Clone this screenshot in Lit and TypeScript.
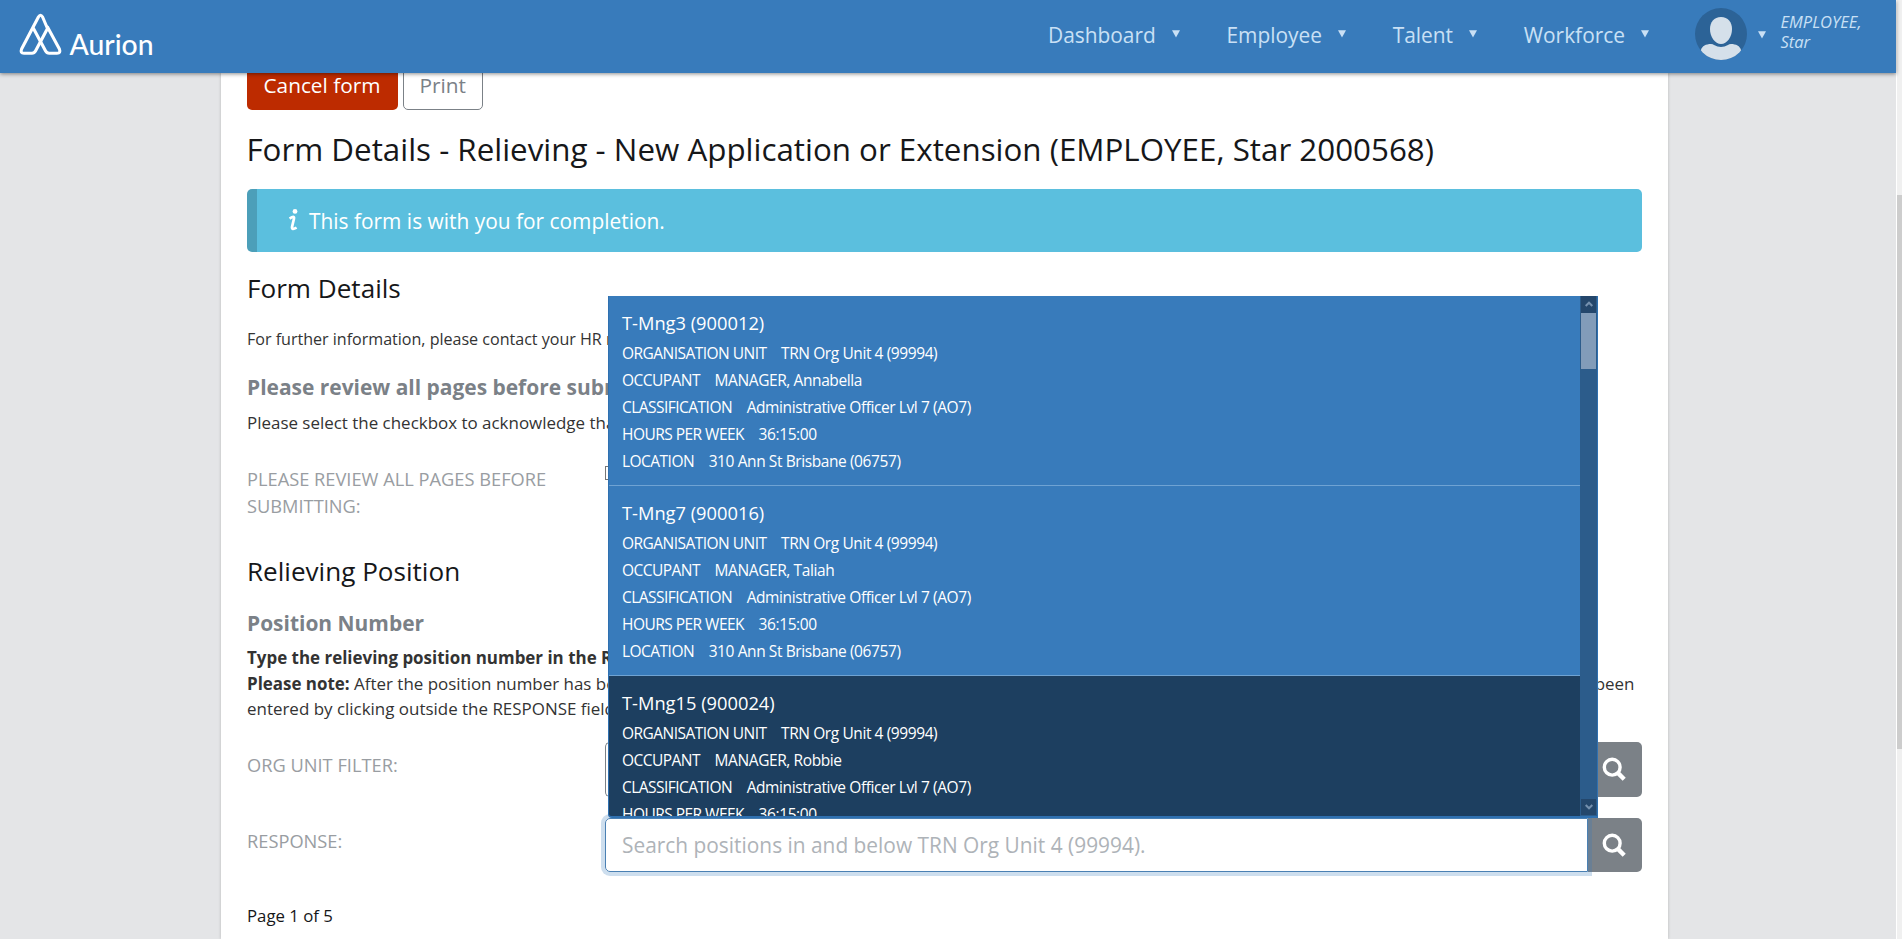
import { LitElement, html, css } from "lit";
import { customElement } from "lit/decorators.js";
import { classMap } from "lit/directives/class-map.js";

interface Position {
  title: string;
  occupant: string;
  active?: boolean;
}

const positions: Position[] = [
  { title: "T-Mng3 (900012)", occupant: "MANAGER, Annabella" },
  { title: "T-Mng7 (900016)", occupant: "MANAGER, Taliah" },
  { title: "T-Mng15 (900024)", occupant: "MANAGER, Robbie", active: true },
];

const arrow = html`<svg width="8" height="8" viewBox="0 0 8 8"><path d="M0 0.2H8L4 7.6Z" fill="currentColor" /></svg>`;

const searchIcon = html`<svg width="26" height="26" viewBox="0 0 26 26" fill="none" stroke="#fff">
  <circle cx="11.2" cy="11.2" r="7.9" stroke-width="3.4" />
  <path d="M16.6 16.6L23.2 23.2" stroke-width="4.4" />
</svg>`;

@customElement("app-header")
class AppHeader extends LitElement {
  static styles = css`
    :host { display: block; position: relative; z-index: 5; }
    .bar {
      display: flex; align-items: center; height: 73px; box-sizing: border-box; padding-bottom: 5px;
      background: #387bbb; color: #c9e0f5; box-shadow: 0 1px 4px rgba(0, 0, 0, 0.45);
    }
    .logo { display: block; overflow: visible; margin: 0 auto 0 16px; }
    .word { font: 500 29px "Lato", sans-serif; fill: #fff; }
    nav { display: flex; gap: 46.7px; font-size: 20.9px; line-height: 28px; }
    .link { display: flex; align-items: center; gap: 16px; }
    svg { display: block; }
    .link span { padding-top: 1px; }
    .link svg { margin-top: 0; }
    .user .caret svg { margin-top: 1px; }
    .user { display: flex; align-items: center; width: 201px; margin-left: 46px; }
    .caret { margin-left: 10.5px; }
    .name { margin: -5px 0 0 15px; font: italic 16.5px/20px "Open Sans", sans-serif; }
  `;
  render() {
    return html`<header class="bar">
      <svg class="logo" width="142" height="46" viewBox="0 0 142 46">
        <g fill="none" stroke="#fff" stroke-width="3.1" stroke-linejoin="round" stroke-linecap="round">
          <path d="M31.5 17.5L26.6 6Q24.5 2.4 22.4 6L5.6 38Q4 42.2 8 42.2H16Q18.3 42.2 19.5 40L31.5 17.5" />
          <path d="M17.5 17.5L29.6 40Q30.8 42.2 33.2 42.2H41Q45 42.2 43.4 38L31.5 16" />
        </g>
        <text class="word" x="53.5" y="43.5" textLength="84" lengthAdjust="spacingAndGlyphs">Aurion</text>
      </svg>
      <nav>
        ${["Dashboard", "Employee", "Talent", "Workforce"].map(
          (t) => html`<div class="link"><span>${t}</span>${arrow}</div>`
        )}
      </nav>
      <div class="user">
        <svg width="52" height="52" viewBox="0 0 52 52">
          <defs><clipPath id="c"><circle cx="26" cy="26" r="26" /></clipPath></defs>
          <circle cx="26" cy="26" r="26" fill="#2c6397" />
          <g clip-path="url(#c)" fill="#d5e0ea">
            <path d="M26 9C33 9 37 14 37 21C37 29 32 36 26 36S15 29 15 21C15 14 19 9 26 9Z" />
            <path d="M0 52L6 42C7 38 11 36 16 36Q18 36 19 37Q26 41 33 37Q34 36 36 36C41 36 45 38 46 42L52 52Z" />
          </g>
        </svg>
        <div class="caret">${arrow}</div>
        <div class="name">EMPLOYEE,<br />Star</div>
      </div>
    </header>`;
  }
}

@customElement("position-menu")
class PositionMenu extends LitElement {
  static styles = css`
    :host { display: block; }
    .menu {
      display: flex; height: 522px; box-sizing: border-box; overflow: hidden; color: #fff; background: #387bbb;
      border: solid #2f70b0; border-width: 0 1px 2px; border-bottom-left-radius: 4px;
    }
    .list { flex: 1; overflow: hidden; }
    .item { height: 190px; box-sizing: border-box; padding: 13px 0 0 13px; border-bottom: 1px solid #6fa3d3; }
    .active { background: #1d3f60; }
    .title { font-size: 18.3px; line-height: 27px; margin-bottom: 4px; }
    .row { display: flex; gap: 14.6px; font-size: 15.5px; line-height: 27px; white-space: nowrap; }
    .key { letter-spacing: -0.53px; }
    .value { letter-spacing: -0.41px; }
    .scroll { display: flex; flex-direction: column; width: 17px; box-sizing: border-box; padding: 0 1px; background: #2c5c8b; }
    .btn { height: 17px; display: grid; place-items: center; background: #24476c; }
    .thumb { height: 56px; background: #829cb9; }
    .btn.down { margin-top: auto; height: 16px; margin-bottom: 1px; }
  `;
  render() {
    const row = (k: string, v: string) =>
      html`<div class="row"><span class="key">${k}</span><span class="value">${v}</span></div>`;
    return html`<div class="menu">
      <div class="list">
        ${positions.map(
          (p) => html`<div class=${classMap({ item: true, active: !!p.active })}>
            <div class="title">${p.title}</div>
            ${row("ORGANISATION UNIT", "TRN Org Unit 4 (99994)")} ${row("OCCUPANT", p.occupant)}
            ${row("CLASSIFICATION", "Administrative Officer Lvl 7 (AO7)")} ${row("HOURS PER WEEK", "36:15:00")}
            ${p.active ? "" : row("LOCATION", "310 Ann St Brisbane (06757)")}
          </div>`
        )}
      </div>
      <div class="scroll">
        <div class="btn"><svg width="8" height="6" viewBox="0 0 8 6"><path d="M.7 5L4 1.7L7.3 5" fill="none" stroke="#7590ae" stroke-width="2" /></svg></div>
        <div class="thumb"></div>
        <div class="btn down"><svg width="8" height="6" viewBox="0 0 8 6"><path d="M.7 1L4 4.3L7.3 1" fill="none" stroke="#7590ae" stroke-width="2" /></svg></div>
      </div>
    </div>`;
  }
}

@customElement("app-root")
class AppRoot extends LitElement {
  static styles = css`
    :host { display: block; font-family: "Open Sans", sans-serif; color: #333; }
    .window { display: flex; height: 939px; overflow: hidden; background: #e4e5e7; }
    .view { flex: 1; min-width: 0; }
    .page {
      width: 1447px; height: 866px; box-sizing: border-box; margin-left: 221px; padding: 0 26px;
      background: #fff; box-shadow: 0 0 3px rgba(0, 0, 0, 0.2); white-space: nowrap;
    }
    .page::before { content: ""; display: table; }
    .actions { display: flex; gap: 5px; margin-top: -14px; }
    .button { height: 51px; line-height: 52px; box-sizing: border-box; padding: 0 16.5px; border-radius: 5px; font-size: 20.8px; }
    .cancel { width: 151px; background: #bd2b00; color: #fff; }
    .print { width: 80px; border: 1px solid #7b8187; color: #7b8187; padding: 0 15.5px; line-height: 51px; }
    h1, h2, h3, p { margin: 0; font-weight: 400; }
    h1 { font-size: 31.33px; line-height: 38px; margin-top: 20px; color: #161719; text-indent: -0.6px; }
    .alert {
      display: flex; align-items: center; height: 63px; box-sizing: border-box; margin-top: 21px; padding-left: 31px;
      border-left: 10px solid #4c9fb9; border-radius: 5px; background: #5bbfde; color: #fff; font-size: 20.9px;
    }
    .alert svg { margin: -2px 11px 0 0; }
    h2 { font-size: 26.1px; line-height: 32px; color: #161719; }
    h3 { font-size: 20.95px; line-height: 28px; font-weight: 700; color: #7b8187; }
    b { font-weight: 700; }
    .first { margin-top: 20px; }
    .info { margin-top: 22px; font-size: 16.1px; line-height: 26px; letter-spacing: -0.02px; }
    .review { margin-top: 21px; }
    .select { margin-top: 9px; font-size: 16.95px; line-height: 25px; }
    .field { display: grid; grid-template-columns: 358px 1fr; font-size: 18.25px; line-height: 27px; color: #999da2; }
    .ack { margin-top: 30px; height: 55px; }
    .box { width: 14px; height: 14px; box-sizing: border-box; border: 1px solid #767676; margin-top: 1px; }
    .second { margin-top: 35px; }
    .number { margin-top: 22px; }
    .note { margin-top: 8px; font-size: 16.95px; line-height: 25.6px; }
    .split { display: flex; justify-content: space-between; padding-right: 7.5px; }
    .org { margin-top: 20px; height: 55px; }
    .response { margin-top: 21px; height: 54px; }
    .label { padding-top: 9.5px; }
    .group { position: relative; display: flex; }
    .input { flex: 1; box-sizing: border-box; border: 1px solid #7b8187; border-right: 0; border-radius: 5px 0 0 5px; padding-left: 16px; font-size: 20.89px; line-height: 52px; color: #aeb3b8; }
    .focus { position: relative; border: 1px solid #4a80b3; box-shadow: 0 0 0 4px rgba(56, 123, 187, 0.25); z-index: 1; }
    .search { width: 54px; display: grid; place-items: center; padding: 0 1.5px 0 0; box-sizing: border-box; border-radius: 0 5px 5px 0; background: #7b8187; }
    .menu { position: absolute; left: 3px; bottom: 54px; width: 990px; z-index: 3; }
    .paging { margin-top: 31px; font-size: 16.8px; line-height: 26px; color: #161719; }
    .track { width: 5px; background: #f0f0f0; border-left: 1px solid #fff; padding-top: 195px; box-sizing: content-box; }
    .thumb { height: 554px; background: #cdcdcd; }
  `;
  render() {
    return html`<div class="window">
      <div class="view">
        <app-header></app-header>
        <main class="page">
          <div class="actions">
            <div class="button cancel">Cancel form</div>
            <div class="button print">Print</div>
          </div>
          <h1>Form Details - Relieving - New Application or Extension (EMPLOYEE, Star 2000568)</h1>
          <div class="alert">
            <svg width="10" height="24" viewBox="0 0 10 24">
              <circle cx="7" cy="3.4" r="2.4" fill="#fff" />
              <path d="M1.6 10.6Q6.8 7 5.9 11L4.1 18.6Q3.3 22.6 8.6 19.6" fill="none" stroke="#fff" stroke-width="2.7" />
            </svg>
            <span>This form is with you for completion.</span>
          </div>
          <h2 class="first">Form Details</h2>
          <p class="info">For further information, please contact your HR m</p>
          <h3 class="review">Please review all pages before subm</h3>
          <p class="select">Please select the checkbox to acknowledge that</p>
          <div class="field ack"><div>PLEASE REVIEW ALL PAGES BEFORE<br />SUBMITTING:</div><div class="box"></div></div>
          <h2 class="second">Relieving Position</h2>
          <h3 class="number">Position Number</h3>
          <div class="note">
            <div><b>Type the relieving position number in the R</b></div>
            <div class="split"><span><b>Please note:</b> After the position number has be</span><span>been</span></div>
            <div>entered by clicking outside the RESPONSE field</div>
          </div>
          <div class="field org">
            <div class="label">ORG UNIT FILTER:</div>
            <div class="group"><div class="input"></div><div class="search">${searchIcon}</div></div>
          </div>
          <div class="field response">
            <div class="label">RESPONSE:</div>
            <div class="group">
              <div class="input focus">Search positions in and below TRN Org Unit 4 (99994).</div>
              <div class="search">${searchIcon}</div>
              <position-menu class="menu"></position-menu>
            </div>
          </div>
          <p class="paging">Page 1 of 5</p>
        </main>
      </div>
      <div class="track"><div class="thumb"></div></div>
    </div>`;
  }
}
